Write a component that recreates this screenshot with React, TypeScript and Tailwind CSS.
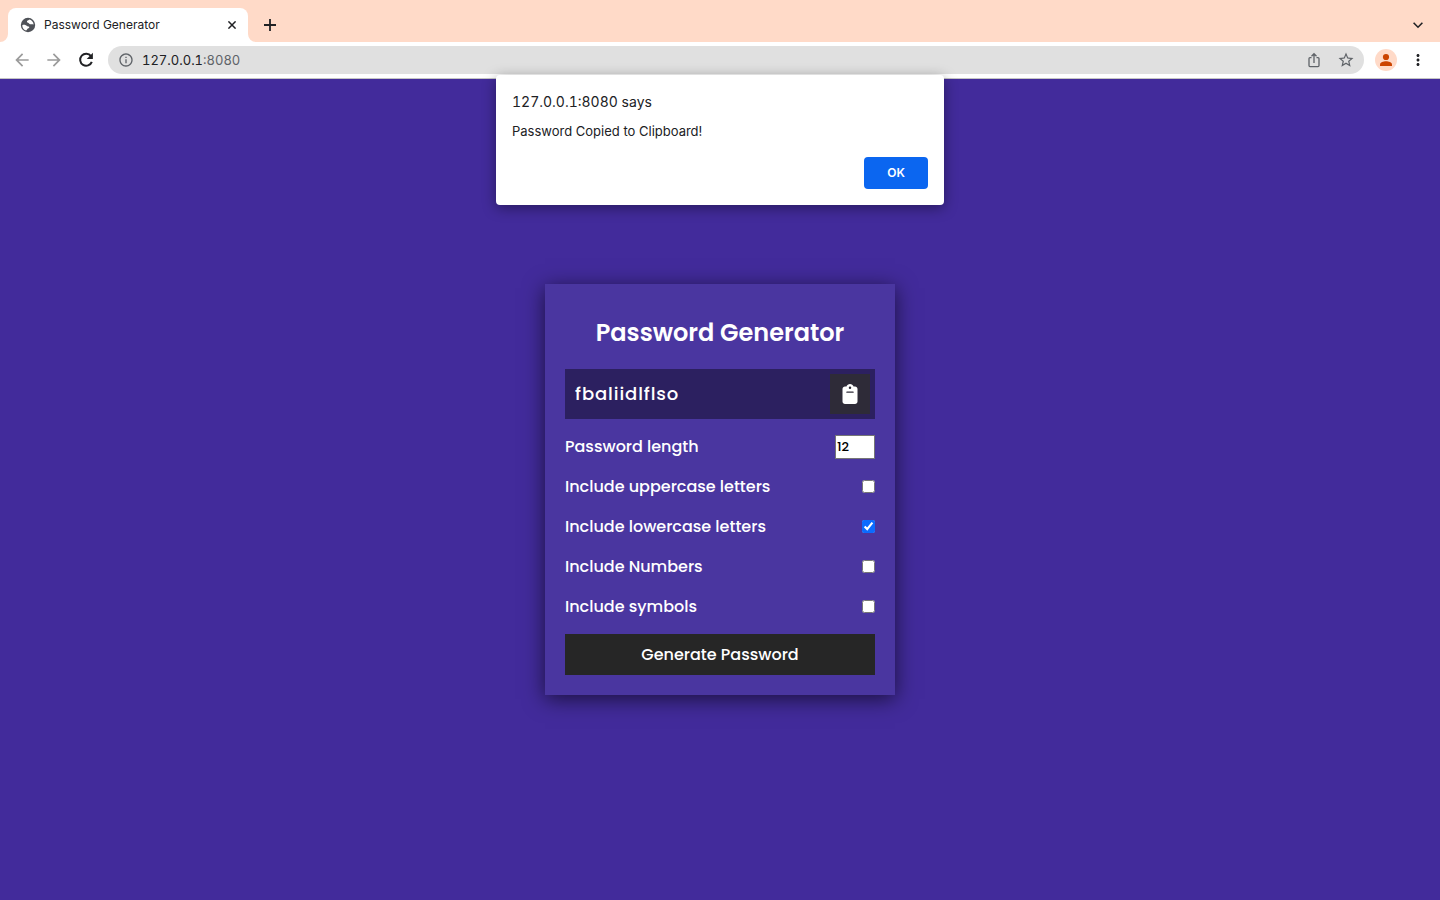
import { useState } from "react";
import { FaClipboard } from "react-icons/fa6";
import { MdArrowBack, MdArrowForward, MdInfoOutline, MdMoreVert, MdStarOutline } from "react-icons/md";

function GlobeIcon() {
  return (
    <svg className="size-4" viewBox="0 0 16 16" aria-hidden="true">
      <circle cx="8" cy="8" r="7.2" fill="#4f5258" />
      <path
        d="M2.300 8.200c1-.5 2.400-.4 3.500 0 .9.300 1.300 1.100 2.300 1.200.9.100 1.300.200 1.200.9-.1.900-1.300 1-1.800 1.500-.5.600-.7 1.500-1.500 1.700C3.600 13 2.200 10.600 2.300 8.200ZM9.600 2.500c-.5.600-1.900.7-2.500 1.500-.5.700.1 1.500.9 1.800.9.400 1.200 1.200 2.200 1.400 1.100.2 2.300-.1 3.400.3-.2-2.200-1.700-4.400-4-5Z"
        fill="#fff"
      />
    </svg>
  );
}

function TabStrip() {
  return (
    <header className="flex h-[42px] items-end bg-[#ffdac8]">
      <svg className="size-2 shrink-0" viewBox="0 0 8 8" fill="#fff" aria-hidden="true">
        <path d="M8 0v8H0a8 8 0 0 0 8-8Z" />
      </svg>
      <div className="flex h-[34px] w-60 items-center rounded-t-lg bg-white pl-3 pr-2">
        <GlobeIcon />
        <span className="ml-2 grow text-xs text-[#202124]">Password Generator</span>
        <button type="button" aria-label="Close tab" className="flex size-4 items-center justify-center text-[#202124]">
          <svg className="size-2" viewBox="0 0 8 8" fill="none" stroke="currentColor" strokeWidth="1.5" aria-hidden="true">
            <path d="M.4.4l7.2 7.2M7.6.4.4 7.6" />
          </svg>
        </button>
      </div>
      <svg className="size-2 shrink-0" viewBox="0 0 8 8" fill="#fff" aria-hidden="true">
        <path d="M0 0v8h8a8 8 0 0 1-8-8Z" />
      </svg>
      <button type="button" aria-label="New tab" className="flex h-[34px] w-7 items-center justify-center text-[#202124]">
        <svg className="size-3" viewBox="0 0 12 12" fill="none" stroke="currentColor" strokeWidth="1.8" aria-hidden="true">
          <path d="M6 0v12M0 6h12" />
        </svg>
      </button>
      <button type="button" aria-label="Search tabs" className="ml-auto mr-2 flex h-[34px] w-7 items-center justify-center text-[#202124]">
        <svg className="h-2 w-2.5" viewBox="0 0 10 8" fill="none" stroke="currentColor" strokeWidth="1.6" aria-hidden="true">
          <path d="M.6 1.8 5 6.2l4.4-4.4" />
        </svg>
      </button>
    </header>
  );
}

function Toolbar() {
  return (
    <nav aria-label="Browser toolbar" className="flex h-[37px] items-center border-b border-[#c4c4c4] bg-white pl-3 pr-[13px]">
      <div className="flex gap-3">
        <button type="button" aria-label="Back" className="text-[#9b9b9b]">
          <MdArrowBack className="size-5" />
        </button>
        <button type="button" aria-label="Forward" className="text-[#9b9b9b]">
          <MdArrowForward className="size-5" />
        </button>
        <button type="button" aria-label="Reload" className="text-[#202124]">
          <svg className="size-5" viewBox="0 0 20 20" aria-hidden="true">
            <path d="M15 6.2A6 6 0 1 0 15.800 11.800" fill="none" stroke="currentColor" strokeWidth="2" />
            <path d="M16.900 2.800V9h-6.200Z" fill="currentColor" />
          </svg>
        </button>
      </div>
      <div className="ml-3 flex h-7 grow items-center rounded-full bg-[#e0e0e0] pl-2.5 pr-[9px] text-[#5f6368]">
        <MdInfoOutline className="size-4" />
        <a href="#" className="ml-2 grow text-[13px] leading-5 tabular-nums">
          <span className="text-[#202124]">127.0.0.1</span>:8080
        </a>
        <button type="button" aria-label="Share" className="flex size-4 items-center justify-center">
          <svg className="size-4" viewBox="0 0 16 16" fill="none" stroke="currentColor" strokeWidth="1.3" aria-hidden="true">
            <path d="M5.500 5.600H4a1 1 0 0 0-1 1v7a1 1 0 0 0 1 1h8a1 1 0 0 0 1-1v-7a1 1 0 0 0-1-1h-1.500M8 11V2M5.500 4.200 8 1.700l2.500 2.500" />
          </svg>
        </button>
        <button type="button" aria-label="Bookmark this page" className="ml-[15px]">
          <MdStarOutline className="size-[18px]" />
        </button>
      </div>
      <button type="button" aria-label="Profile" className="ml-[11px] flex size-[22px] items-center justify-center rounded-full bg-[#ffdac8] text-[#cc4400]">
        <svg className="size-[22px]" viewBox="0 0 22 22" fill="currentColor" aria-hidden="true">
          <circle cx="11" cy="8" r="3.1" />
          <path d="M5 17v-1.500c0-2 3.500-3.200 6-3.200s6 1.200 6 3.200V17Z" />
        </svg>
      </button>
      <button type="button" aria-label="Menu" className="ml-3 text-[#202124]">
        <MdMoreVert className="size-[18px]" />
      </button>
    </nav>
  );
}

function CopyAlert({ onClose }: { onClose: () => void }) {
  return (
    <div
      role="alertdialog"
      aria-labelledby="alert-title"
      aria-describedby="alert-text"
      className="absolute left-1/2 top-[75px] w-[448px] -translate-x-1/2 rounded bg-white p-4 text-[#202124] shadow-[0_3px_14px_rgba(0,0,0,0.4)]"
    >
      <h2 id="alert-title" className="text-sm leading-[22px] tabular-nums">127.0.0.1:8080 says</h2>
      <p id="alert-text" className="mt-2 text-[13px] leading-5">Password Copied to Clipboard!</p>
      <div className="mt-4 flex justify-end">
        <button type="button" onClick={onClose} className="h-8 w-16 rounded bg-[#0b66f0] text-xs font-semibold text-white">
          OK
        </button>
      </div>
    </div>
  );
}

const options = [
  { id: "uppercase", label: "Include uppercase letters", initial: false },
  { id: "lowercase", label: "Include lowercase letters", initial: true },
  { id: "numbers", label: "Include Numbers", initial: false },
  { id: "symbols", label: "Include symbols", initial: false },
];

function GeneratorCard({ onCopy }: { onCopy: () => void }) {
  return (
    <form
      onSubmit={(event) => event.preventDefault()}
      className="w-[350px] bg-[#4a36a0] p-5 text-base font-medium text-white shadow-[0_4px_20px_rgba(0,0,0,0.6)]"
    >
      <h1 className="mb-[18px] mt-2.5 text-center text-2xl leading-[37px] font-semibold">Password Generator</h1>
      <div className="flex h-[50px] items-center bg-[#2c2060] pl-2.5 pr-[5px]">
        <output className="grow text-lg tracking-wider">fbaliidlflso</output>
        <button type="button" aria-label="Copy password" onClick={onCopy} className="flex size-10 items-center justify-center bg-[#2e2b38]">
          <FaClipboard className="size-5" />
        </button>
      </div>
      <div className="my-[15px] flex flex-col gap-[15px]">
        <div className="flex h-[25px] items-center justify-between">
          <label htmlFor="length">Password length</label>
          <input
            id="length"
            type="number"
            min={4}
            max={20}
            defaultValue={12}
            className="h-6 w-10 border border-[#767676] bg-white px-px text-[13px] text-black"
          />
        </div>
        {options.map((option) => (
          <div key={option.id} className="flex h-[25px] items-center justify-between">
            <label htmlFor={option.id}>{option.label}</label>
            <input id={option.id} type="checkbox" defaultChecked={option.initial} className="size-[13px] accent-[#0b6bff]" />
          </div>
        ))}
      </div>
      <button type="submit" className="block h-[41px] w-full bg-[#262626]">
        Generate Password
      </button>
    </form>
  );
}

export default function App() {
  const [alertOpen, setAlertOpen] = useState(true);
  return (
    <div className="relative flex min-h-screen flex-col bg-[#422b9b] font-['Inter',sans-serif]">
      <TabStrip />
      <Toolbar />
      <main className="flex grow items-center justify-center font-['Poppins','Inter',sans-serif]">
        <GeneratorCard onCopy={() => setAlertOpen(true)} />
      </main>
      {alertOpen && <CopyAlert onClose={() => setAlertOpen(false)} />}
    </div>
  );
}
